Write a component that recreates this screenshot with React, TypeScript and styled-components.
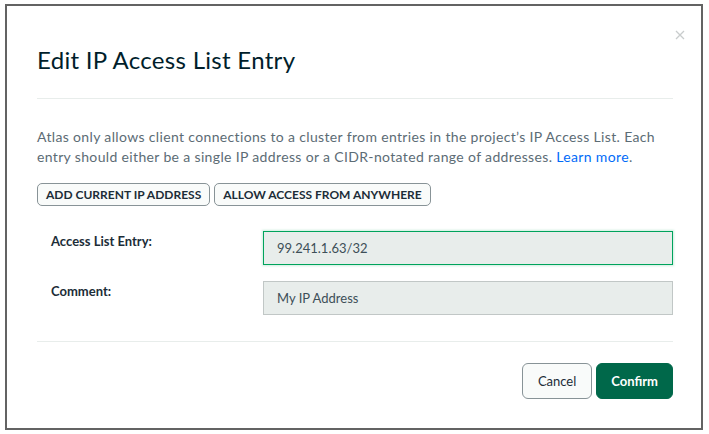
import styled, { createGlobalStyle } from 'styled-components'

const GlobalStyle = createGlobalStyle`
  html, body {
    margin: 0;
    padding: 0;
    background: #ffffff;
  }
  body {
    font-family: Lato, "Noto Sans", sans-serif;
  }
  * {
    box-sizing: border-box;
  }
`

export const Modal = styled.div`
  position: relative;
  width: 698px;
  height: 426px;
  margin: 4px 0 0 5px;
  border: 2px solid #636363;
  background: #ffffff;
  padding: 0 28px 0 30px;
  display: flex;
  flex-direction: column;
`

export const Close = styled.button`
  position: absolute;
  top: 19px;
  right: 11px;
  width: 20px;
  height: 20px;
  padding: 0;
  border: none;
  background: transparent;
  display: flex;
  align-items: center;
  justify-content: center;
`

export const Title = styled.h2`
  margin: 0;
  padding: 38px 0 22px;
  font-size: 24px;
  line-height: 32px;
  font-weight: 400;
  letter-spacing: 0.3px;
  color: #001e2b;
  border-bottom: 1px solid #e8edeb;
`

export const Text = styled.p`
  margin: 28px 0 0;
  font-size: 14px;
  line-height: 20px;
  letter-spacing: 0.35px;
  color: #5c6c75;

  a {
    color: #016bf8;
    text-decoration: none;
  }
`

export const QuickRow = styled.div`
  display: flex;
  gap: 4px;
  margin-top: 16px;
`

export const QuickButton = styled.button`
  height: 23px;
  padding: 0 8px;
  border: 1px solid #889397;
  border-radius: 5px;
  background: #f9fbfa;
  font-family: Lato, "Noto Sans", sans-serif;
  font-size: 12px;
  font-weight: 700;
  color: #1c2d38;
  text-transform: uppercase;
`

export const Fields = styled.div`
  display: flex;
  flex-direction: column;
  gap: 16px;
  margin-top: 25px;
  padding-bottom: 26px;
  border-bottom: 1px solid #e8edeb;
`

export const Row = styled.div`
  display: grid;
  grid-template-columns: 226px 1fr;
  align-items: start;
`

export const Label = styled.label`
  padding: 0 0 0 14px;
  font-size: 13px;
  line-height: 20px;
  font-weight: 700;
  color: #1c2d38;
`

export const Input = styled.div<{ $focused?: boolean }>`
  height: 34px;
  padding: 0 13px;
  display: flex;
  align-items: center;
  background: #e8edeb;
  border: 1px solid ${(p) => (p.$focused ? '#00a35c' : '#c1c7c6')};
  box-shadow: ${(p) => (p.$focused ? '0 0 2px 1px rgba(0,163,92,0.2)' : 'none')};
  font-size: 13px;
  color: #3d4f58;
`

export const Footer = styled.div`
  display: flex;
  justify-content: flex-end;
  gap: 4px;
  margin-top: 21px;
`

export const FooterButton = styled.button<{ $primary?: boolean }>`
  height: 36px;
  padding: 0 ${(p) => (p.$primary ? 14 : 15)}px;
  border-radius: 6px;
  border: 1px solid ${(p) => (p.$primary ? '#00684a' : '#889397')};
  background: ${(p) => (p.$primary ? '#00684a' : '#f9fbfa')};
  color: ${(p) => (p.$primary ? '#ffffff' : '#1c2d38')};
  font-family: Lato, "Noto Sans", sans-serif;
  font-size: 13px;
  font-weight: ${(p) => (p.$primary ? 700 : 400)};
`

export default function App() {
  return (
    <>
      <GlobalStyle />
      <Modal>
        <Close aria-label="Close">
          <svg width="10" height="10" viewBox="0 0 10 10">
            <path d="M1 1 L9 9 M9 1 L1 9" stroke="#c9cccd" strokeWidth="1.3" />
          </svg>
        </Close>
        <Title>Edit IP Access List Entry</Title>
        <Text>
          Atlas only allows client connections to a cluster from entries in the project’s IP Access List. Each
          <br />
          entry should either be a single IP address or a CIDR-notated range of addresses. <a href="#">Learn more</a>.
        </Text>
        <QuickRow>
          <QuickButton>Add current IP address</QuickButton>
          <QuickButton>Allow access from anywhere</QuickButton>
        </QuickRow>
        <Fields>
          <Row>
            <Label>Access List Entry:</Label>
            <Input $focused>99.241.1.63/32</Input>
          </Row>
          <Row>
            <Label>Comment:</Label>
            <Input>My IP Address</Input>
          </Row>
        </Fields>
        <Footer>
          <FooterButton>Cancel</FooterButton>
          <FooterButton $primary>Confirm</FooterButton>
        </Footer>
      </Modal>
    </>
  )
}
